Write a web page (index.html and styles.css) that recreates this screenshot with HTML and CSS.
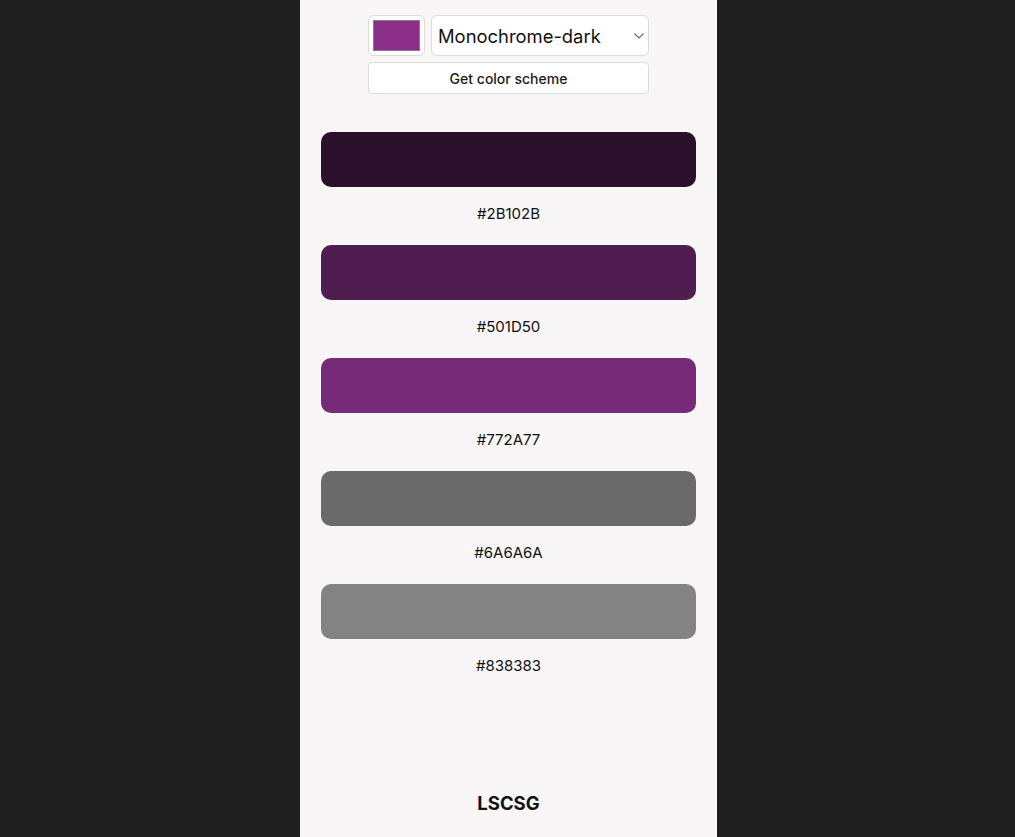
FILE: index.html
```html
<!DOCTYPE html>
<html lang="en">
<head>
<meta charset="utf-8">
<title>LSCSG</title>
<link rel="stylesheet" href="styles.css">
</head>
<body>
<div class="app">
  <form class="controls">
    <div class="row">
      <div class="picker"><span class="picker-color"></span></div>
      <div class="select">
        <span class="select-text">Monochrome-dark</span>
        <svg class="chevron" width="10" height="6" viewBox="0 0 10 6"><path d="M0.5 0.5 L5 5 L9.5 0.5" fill="none" stroke="#666" stroke-width="1.1"/></svg>
      </div>
    </div>
    <button type="button" class="btn">Get color scheme</button>
  </form>
  <main class="scheme">
    <div class="item"><div class="bar" style="background:#2B102B"></div><p class="hex">#2B102B</p></div>
    <div class="item"><div class="bar" style="background:#501D50"></div><p class="hex">#501D50</p></div>
    <div class="item"><div class="bar" style="background:#772A77"></div><p class="hex">#772A77</p></div>
    <div class="item"><div class="bar" style="background:#6A6A6A"></div><p class="hex">#6A6A6A</p></div>
    <div class="item"><div class="bar" style="background:#838383"></div><p class="hex">#838383</p></div>
  </main>
  <footer class="footer">LSCSG</footer>
</div>
</body>
</html>
```
FILE: styles.css
```css
* { box-sizing: border-box; }
html, body { margin: 0; padding: 0; }
body {
  background: #1f1f1f;
  font-family: Inter, "Noto Sans", sans-serif;
  color: #111;
}
.app {
  width: 417px;
  min-height: 100vh;
  margin-left: calc(50% - 207.5px);
  background: #f8f6f7;
  display: flex;
  flex-direction: column;
}
.controls {
  width: 281px;
  margin: 15px auto 0;
  display: flex;
  flex-direction: column;
  gap: 6px;
}
.row {
  display: flex;
  gap: 6px;
  height: 41px;
}
.picker {
  width: 57px;
  border: 1px solid #dcdadb;
  border-radius: 6px;
  background: #fff;
  padding: 4px;
  display: flex;
}
.picker-color {
  flex: 1;
  background: #8b2f8b;
  border: 1px solid #8a7a8a;
}
.select {
  flex: 1;
  border: 1px solid #dcdadb;
  border-radius: 6px;
  background: #fff;
  display: flex;
  align-items: center;
  justify-content: space-between;
  padding: 0 4px 0 6px;
}
.select-text {
  font-size: 18.4px;
  color: #111;
}
.btn {
  height: 32px;
  border: 1px solid #dcdadb;
  border-radius: 4px;
  background: #fff;
  font-family: inherit;
  font-size: 14px;
  font-weight: 500;
  color: #1a1a1a;
}
.scheme {
  padding: 38px 21px 0;
  display: flex;
  flex-direction: column;
}
.item { display: flex; flex-direction: column; }
.bar {
  height: 55px;
  border-radius: 10px;
}
.hex {
  margin: 17px 0 21px;
  line-height: 20px;
  font-size: 15px;
  text-align: center;
}
.footer {
  margin-top: auto;
  padding-bottom: 22px;
  line-height: 24px;
  font-size: 18.5px;
  font-weight: 700;
  text-align: center;
}
```
